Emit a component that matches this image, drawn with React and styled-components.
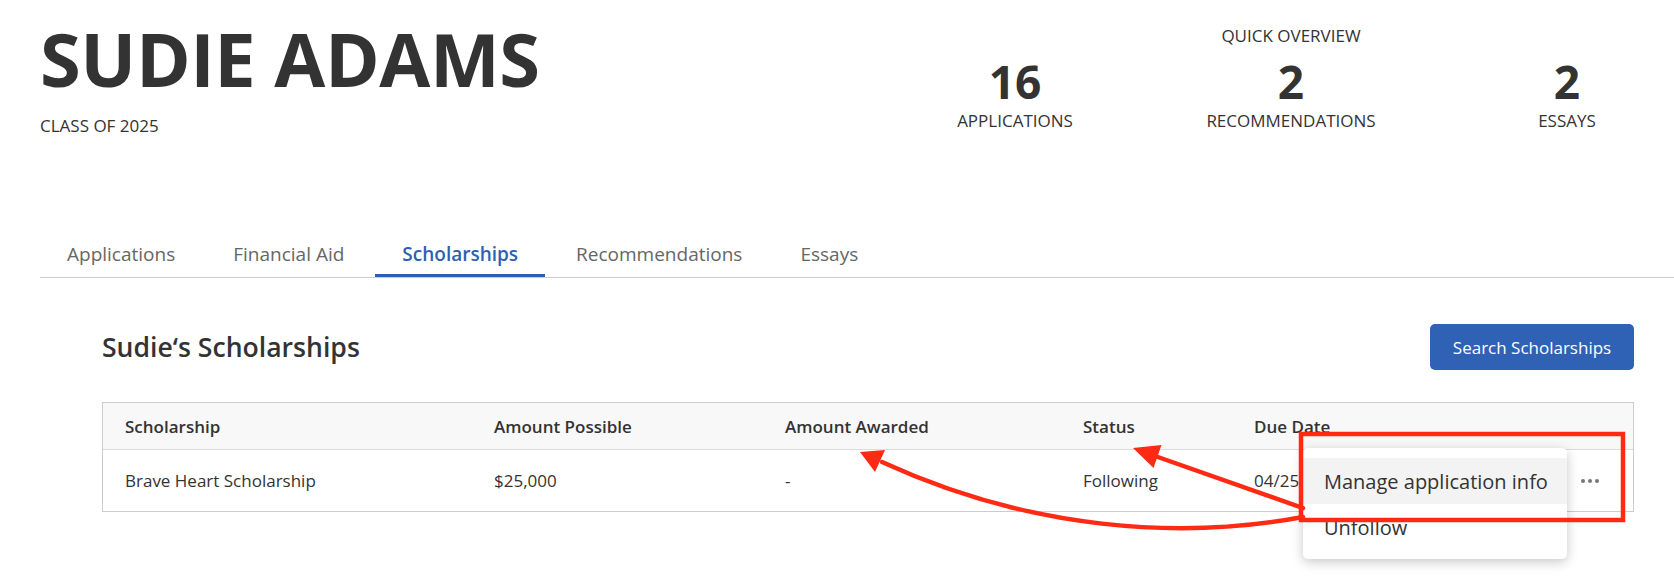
import React from 'react';
import styled, { createGlobalStyle } from 'styled-components';

const GlobalStyle = createGlobalStyle`
  html, body {
    margin: 0;
    padding: 0;
    background: #ffffff;
  }
  body {
    font-family: "Open Sans", "Liberation Sans", sans-serif;
    color: #333333;
  }
  * { box-sizing: border-box; }
`;

const tabs = ['Applications', 'Financial Aid', 'Scholarships', 'Recommendations', 'Essays'];

const stats = [
  { value: 16, label: 'APPLICATIONS' },
  { value: 2, label: 'RECOMMENDATIONS' },
  { value: 2, label: 'ESSAYS' }
];

const columns = ['Scholarship', 'Amount Possible', 'Amount Awarded', 'Status', 'Due Date', ''];

const Dots = () => (
  <svg width="20" height="6" viewBox="0 0 20 6">
    <circle cx="3" cy="3" r="2" fill="#777" />
    <circle cx="10" cy="3" r="2" fill="#777" />
    <circle cx="17" cy="3" r="2" fill="#777" />
  </svg>
);

const App = () => {
  return (
    <Page>
      <GlobalStyle />
      <Header>
        <Identity>
          <Name>SUDIE ADAMS</Name>
          <ClassOf>CLASS OF 2025</ClassOf>
        </Identity>
        <Overview>
          <OverviewTitle>QUICK OVERVIEW</OverviewTitle>
          <Stats>
            {stats.map(s => (
              <Stat key={s.label}>
                <StatValue>{s.value}</StatValue>
                <StatLabel>{s.label}</StatLabel>
              </Stat>
            ))}
          </Stats>
        </Overview>
      </Header>

      <Tabs>
        {tabs.map(t => (
          <Tab key={t} $active={t === 'Scholarships'}>{t}</Tab>
        ))}
      </Tabs>

      <Section>
        <TitleRow>
          <Title>Sudie‘s Scholarships</Title>
          <PrimaryButton>Search Scholarships</PrimaryButton>
        </TitleRow>

        <Table>
          <HeadRow>
            {columns.map((c, i) => (
              <HeadCell key={i}>{c}</HeadCell>
            ))}
          </HeadRow>
          <BodyRow>
            <Cell>Brave Heart Scholarship</Cell>
            <Cell>$25,000</Cell>
            <Cell>-</Cell>
            <Cell>Following</Cell>
            <Cell>04/25/2025</Cell>
            <ActionCell><Dots /></ActionCell>
          </BodyRow>

          {/* open row menu */}
          <Menu>
            <MenuItem $highlight>Manage application info</MenuItem>
            <MenuItem>Unfollow</MenuItem>
          </Menu>
        </Table>
      </Section>

      {/* red callout drawn on top of the screenshot */}
      <Annotation viewBox="0 0 1674 576" width="1674" height="576">
        <rect x="1301" y="434" width="322" height="86" fill="none" stroke="#ff2a14" strokeWidth="4.5" />
        <path d="M1303 508 L1155 456" fill="none" stroke="#ff2a14" strokeWidth="4.5" strokeLinecap="round" />
        <polygon points="1133,448 1161.5,445 1153.5,468" fill="#ff2a14" />
        <path d="M1303 517 C1180 540, 1030 530, 882 462" fill="none" stroke="#ff2a14" strokeWidth="4.5" strokeLinecap="round" />
        <polygon points="860,452 885,450 875,472" fill="#ff2a14" />
      </Annotation>
    </Page>
  );
};

const Page = styled.div`
  position: relative;
  width: 100%;
  min-height: 576px;
  overflow: hidden;
`;

const Header = styled.header`
  display: flex;
  justify-content: space-between;
  align-items: flex-start;
  padding: 22px 7px 0 40px;
`;

const Identity = styled.div`
  display: flex;
  flex-direction: column;
`;

const Name = styled.h1`
  margin: 0;
  font-size: 74px;
  line-height: 74px;
  font-weight: 700;
  color: #333;
  letter-spacing: -0.4px;
`;

const ClassOf = styled.div`
  margin-top: 20px;
  font-size: 17px;
  line-height: 20px;
  color: #333;
`;

const Overview = styled.div`
  display: flex;
  flex-direction: column;
  align-items: center;
  padding-top: 4px;
`;

const OverviewTitle = styled.div`
  font-size: 17px;
  line-height: 20px;
  color: #333;
`;

const Stats = styled.div`
  display: grid;
  grid-template-columns: repeat(3, 200px);
  column-gap: 76px;
  margin-top: 12px;
`;

const Stat = styled.div`
  display: flex;
  flex-direction: column;
  align-items: center;
`;

const StatValue = styled.div`
  font-size: 46px;
  line-height: 46px;
  font-weight: 700;
  color: #333;
`;

const StatLabel = styled.div`
  margin-top: 7px;
  font-size: 17px;
  line-height: 20px;
  color: #333;
`;

const Tabs = styled.nav`
  display: flex;
  gap: 4px;
  margin: 95px 0 0 40px;
  border-bottom: 1px solid #cccccc;
`;

const Tab = styled.div`
  height: 46px;
  padding: 0 27px;
  display: flex;
  align-items: center;
  font-size: 19px;
  font-weight: ${p => (p.$active ? 600 : 400)};
  color: ${p => (p.$active ? '#2f5fb3' : '#666666')};
  box-shadow: ${p => (p.$active ? 'inset 0 -3px 0 #2f5fb3' : 'none')};
`;

const Section = styled.section`
  margin: 46px 40px 0 102px;
`;

const TitleRow = styled.div`
  display: flex;
  justify-content: space-between;
  align-items: center;
  height: 46px;
`;

const Title = styled.h2`
  margin: 0;
  font-size: 26.6px;
  font-weight: 600;
  color: #333;
`;

const PrimaryButton = styled.button`
  width: 204px;
  height: 46px;
  border: none;
  border-radius: 5px;
  background: #2f61b4;
  color: #ffffff;
  font-family: inherit;
  font-size: 17px;
`;

const Table = styled.div`
  position: relative;
  margin-top: 32px;
  border: 1px solid #cccccc;
`;

const gridCols = '369px 291px 298px 171px 1fr 80px';

const HeadRow = styled.div`
  display: grid;
  grid-template-columns: ${gridCols};
  height: 47px;
  background: #f8f8f8;
  border-bottom: 1px solid #dddddd;
`;

const BodyRow = styled.div`
  display: grid;
  grid-template-columns: ${gridCols};
  height: 61px;
`;

const HeadCell = styled.div`
  display: flex;
  align-items: center;
  padding-left: 22px;
  font-size: 17px;
  font-weight: 600;
  color: #333;
`;

const Cell = styled.div`
  display: flex;
  align-items: center;
  padding-left: 22px;
  font-size: 17px;
  color: #333;
`;

const ActionCell = styled.div`
  display: flex;
  align-items: center;
  justify-content: center;
  padding-right: 6px;
`;

const Menu = styled.div`
  position: absolute;
  top: 45px;
  right: 66px;
  width: 264px;
  padding: 10px 0 9px;
  background: #ffffff;
  border-radius: 5px;
  box-shadow: 0 3px 12px rgba(0, 0, 0, 0.22);
`;

const MenuItem = styled.div`
  height: 46px;
  display: flex;
  align-items: center;
  padding-left: 21px;
  font-size: 20px;
  color: #333;
  background: ${p => (p.$highlight ? '#f3f3f3' : 'transparent')};
`;

const Annotation = styled.svg`
  position: absolute;
  top: 0;
  left: 0;
  pointer-events: none;
`;

export default App;
